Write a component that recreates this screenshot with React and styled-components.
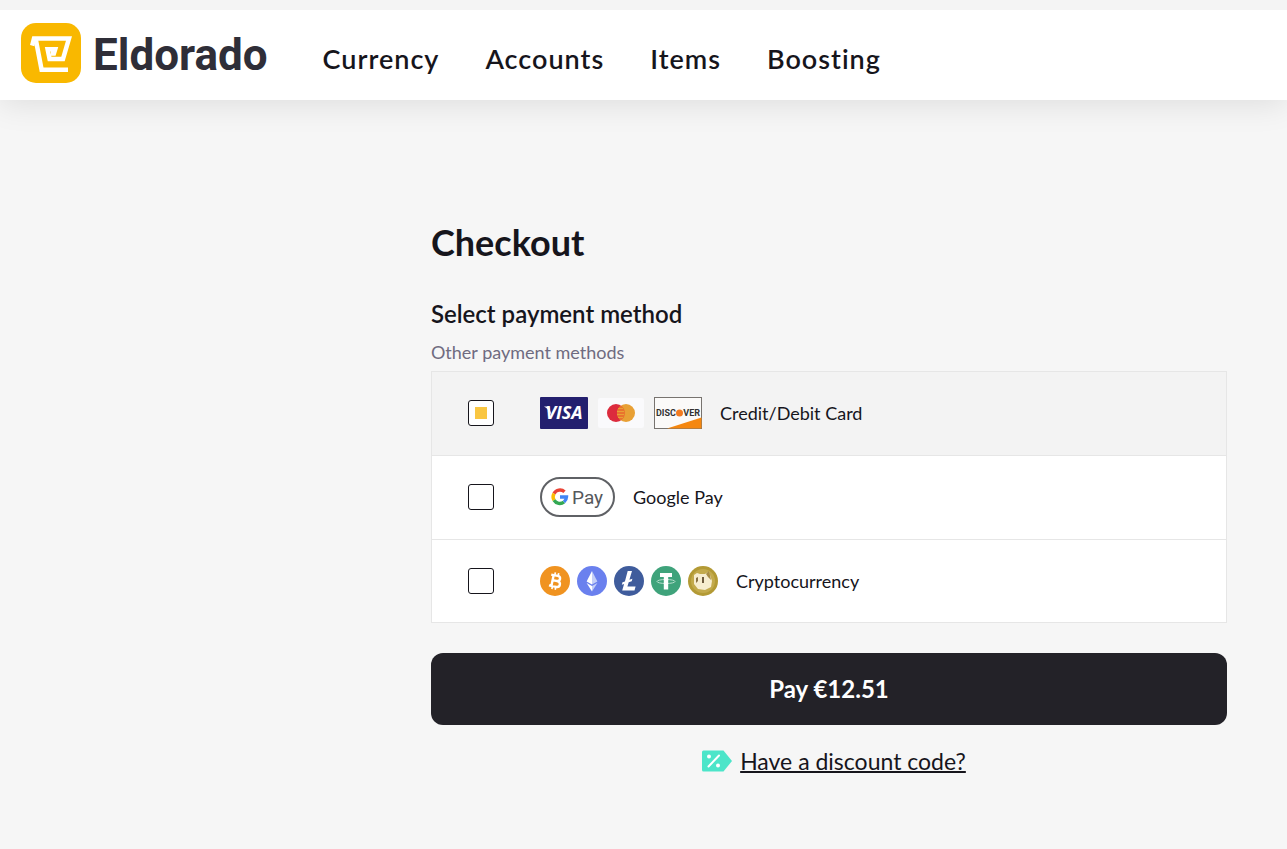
import React, { useState } from 'react'
import styled, { createGlobalStyle } from 'styled-components'

const navLinks = ['Currency', 'Accounts', 'Items', 'Boosting']

const methods = [
    { id: 'card', label: 'Credit/Debit Card', gap: 9, icons: [VisaIcon, MastercardIcon, DiscoverIcon] },
    { id: 'gpay', label: 'Google Pay', gap: 0, icons: [GooglePayIcon] },
    { id: 'crypto', label: 'Cryptocurrency', gap: 7, icons: [BitcoinIcon, EthereumIcon, LitecoinIcon, TetherIcon, DogecoinIcon] },
]

function App() {

    const [selected, setSelected] = useState('card');

    return (
        <>
            <GlobalStyle />
            <Header>
                <Brand href="#">
                    <LogoMark />
                    <BrandName>Eldorado</BrandName>
                </Brand>
                <Menu>
                    {navLinks.map((link) => (
                        <a key={link} href="#">{link}</a>
                    ))}
                </Menu>
            </Header>

            <Main>
                <Title>Checkout</Title>
                <Subtitle>Select payment method</Subtitle>
                <Hint id="methods-hint">Other payment methods</Hint>

                <MethodList role="radiogroup" aria-labelledby="methods-hint">
                    {methods.map((method) => (
                        <MethodRow key={method.id} $active={selected === method.id}>
                            <Radio
                                type="radio"
                                name="payment"
                                value={method.id}
                                checked={selected === method.id}
                                onChange={() => setSelected(method.id)}
                            />
                            <Icons $gap={method.gap}>
                                {method.icons.map((Icon, index) => <Icon key={index} />)}
                            </Icons>
                            <MethodName>{method.label}</MethodName>
                        </MethodRow>
                    ))}
                </MethodList>

                <PayButton type="button">Pay €12.51</PayButton>

                <Discount href="#">
                    <DiscountIcon />
                    <span>Have a discount code?</span>
                </Discount>
            </Main>
        </>
    )
}

export default App

function LogoMark() {
    return (
        <svg width="60" height="60" viewBox="0 0 60 60" aria-hidden="true">
            <rect width="60" height="60" rx="15" fill="#f9b800" />
            <g fill="none" stroke="#fff" strokeWidth="4.5">
                <path d="M11.2 22.6L13 15.5H48L42 36H28.6L26.6 26.3H34.2L32.9 30.4H30" />
                <path d="M14.6 15.5L20.6 46.7H47" />
            </g>
        </svg>
    )
}

function VisaIcon() {
    return (
        <svg width="48" height="32" viewBox="0 0 48 32" aria-hidden="true">
            <rect width="48" height="32" rx="1" fill="#231f6e" />
            <path d="M4 9.5H9L12 20Q9 12 4 9.5Z" fill="#fff" />
            <text x="24" y="22" textAnchor="middle" fontFamily="Open Sans, sans-serif" fontSize="18" fontWeight="700" fontStyle="italic" fill="#fff">VISA</text>
        </svg>
    )
}

function MastercardIcon() {
    return (
        <svg width="48" height="32" viewBox="0 0 48 32" aria-hidden="true">
            <rect x="1" y="1" width="46" height="30" rx="2" fill="#fafafc" />
            <circle cx="19" cy="16" r="9" fill="#dc2b3d" />
            <circle cx="29" cy="16" r="9" fill="#e8a035" />
            <path d="M24 8.5A9 9 0 0 1 24 23.5A9 9 0 0 1 24 8.5Z" fill="#e9732d" />
            <path d="M21 11.5H26M20 14.5H27M20 17.5H27M21 20.5H26" stroke="#e8a035" strokeWidth="1" />
        </svg>
    )
}

function DiscoverIcon() {
    return (
        <svg width="48" height="32" viewBox="0 0 48 32" aria-hidden="true">
            <rect x="0.5" y="0.5" width="47" height="31" fill="#fbfaf9" stroke="#77736f" />
            <path d="M13 31.5L47.5 20.5V31.5Z" fill="#f5870f" />
            <circle cx="25.5" cy="16" r="3.5" fill="#f37b20" />
            <text x="2" y="19" fontFamily="Roboto, sans-serif" fontSize="9" fontWeight="700" fill="#333">DISC</text>
            <text x="46" y="19" textAnchor="end" fontFamily="Roboto, sans-serif" fontSize="9" fontWeight="700" fill="#333">VER</text>
        </svg>
    )
}

function GooglePayIcon() {
    return (
        <svg width="75" height="40" viewBox="0 0 75 40" aria-hidden="true">
            <rect x="1" y="1" width="73" height="38" rx="19" fill="#fff" stroke="#5f6165" strokeWidth="2" />
            <g fill="none" strokeWidth="3.4">
                <path d="M24.5 14.8A6.7 6.7 0 0 0 14 16.6" stroke="#ea4335" />
                <path d="M14 16.6A6.7 6.7 0 0 0 14 23.2" stroke="#fbbc04" />
                <path d="M14 23.2A6.7 6.7 0 0 0 24 25" stroke="#34a853" />
                <path d="M24 25A6.7 6.7 0 0 0 26.5 20H20" stroke="#4285f4" />
            </g>
            <text x="32" y="27" fontFamily="Roboto, sans-serif" fontSize="19" fill="#55585c">Pay</text>
        </svg>
    )
}

function BitcoinIcon() {
    return (
        <svg width="30" height="30" viewBox="0 0 30 30" aria-hidden="true">
            <circle cx="15" cy="15" r="15" fill="#f09320" />
            <g transform="rotate(12 15 15)" fill="none" stroke="#fff" strokeWidth="2.4">
                <path d="M10 9.5H16.5C20.5 9.5 20.5 14.6 16.5 14.6H12.5H17.2C21.6 14.6 21.6 20.5 17.2 20.5H10M12.5 9.5V20.5" />
                <path d="M13.6 6.5V9M17 6.5V9M13.6 21V23.5M17 21V23.5" strokeWidth="1.7" />
            </g>
        </svg>
    )
}

function EthereumIcon() {
    return (
        <svg width="30" height="30" viewBox="0 0 30 30" aria-hidden="true">
            <circle cx="15" cy="15" r="15" fill="#6a80ee" />
            <path d="M15 5V18.6L9.6 15.4Z" fill="#fff" />
            <path d="M15 5L20.4 15.4L15 18.6Z" fill="#c4cff8" />
            <path d="M15 20V25.5L9.6 17Z" fill="#fff" />
            <path d="M15 20L20.4 17L15 25.5Z" fill="#c4cff8" />
        </svg>
    )
}

function LitecoinIcon() {
    return (
        <svg width="30" height="30" viewBox="0 0 30 30" aria-hidden="true">
            <circle cx="15" cy="15" r="15" fill="#3f5c9c" />
            <path d="M13.7 5H18L15.4 13.8L18.4 12.8L17.7 15.2L14.7 16.3L13.4 20.6H21.6L20.5 24.4H8.2L10.1 17.9L7.8 18.7L8.5 16.2L10.9 15.4Z" fill="#fff" />
        </svg>
    )
}

function TetherIcon() {
    return (
        <svg width="30" height="30" viewBox="0 0 30 30" aria-hidden="true">
            <circle cx="15" cy="15" r="15" fill="#3fa37b" />
            <ellipse cx="15" cy="15.5" rx="9" ry="2" fill="none" stroke="#b9dfcf" />
            <path d="M9 7H21V11H17.2V23.5H12.8V11H9Z" fill="#fff" />
        </svg>
    )
}

function DogecoinIcon() {
    return (
        <svg width="30" height="30" viewBox="0 0 30 30" aria-hidden="true">
            <circle cx="15" cy="15" r="15" fill="#b39a35" />
            <circle cx="15" cy="15" r="12" fill="#c3aa4c" />
            <path d="M6 9L9 7L12 8H17L20 6L22 9L24 15L23 21L17 24L10 23L6 18Z" fill="#f7edcf" />
            <path d="M18 8L20.5 5L22 9L23 14L20 11Z" fill="#a88c45" />
            <path d="M8 12L10 11V15L8 17Z" fill="#887044" />
            <path d="M14 11H16V17H14Z" fill="#6d5a3d" />
        </svg>
    )
}

function DiscountIcon() {
    return (
        <svg width="30" height="22" viewBox="0 0 30 22" aria-hidden="true">
            <path d="M1.5 0.5H21.5L30 11L21.5 21.5H1.5Q0 21.5 0 20V2Q0 0.5 1.5 0.5Z" fill="#4ce5c9" />
            <path d="M6.5 16.5L17 5.5" stroke="#fff" strokeWidth="2" strokeLinecap="round" />
            <circle cx="7" cy="6.5" r="2" fill="#fff" />
            <circle cx="16" cy="15.5" r="2" fill="#fff" />
        </svg>
    )
}

const GlobalStyle = createGlobalStyle`
    * {
        box-sizing: border-box;
    }

    body {
        margin: 0;
        background: #f6f6f6;
        color: #16151c;
        font-family: Lato, sans-serif;
    }

    a {
        color: inherit;
        text-decoration: none;
    }
`

const Header = styled.header`
    display: flex;
    align-items: center;
    flex-wrap: wrap;
    gap: 10px 55px;
    min-height: 100px;
    padding: 0 21px;
    border-top: 10px solid #f4f4f4;
    background: #fff;
    box-shadow: 0 4px 30px rgba(0, 0, 0, .1);
`

const Brand = styled.a`
    display: flex;
    align-items: center;
    gap: 12px;
    padding-bottom: 4px;
`

const BrandName = styled.span`
    padding-top: 3px;
    font-family: Roboto, sans-serif;
    font-size: 44px;
    font-weight: 700;
    line-height: 56px;
    color: #2f2e38;
`

const Menu = styled.nav`
    display: flex;
    flex-wrap: wrap;
    gap: 8px 46px;
    padding-top: 8px;

    a {
        font-size: 27px;
        font-weight: 600;
        line-height: 32px;
        letter-spacing: 1px;
    }
`

const Main = styled.main`
    display: flex;
    flex-direction: column;
    padding: 120px 60px 60px 431px;

    @media (max-width: 1000px) {
        padding: 60px 20px;
    }
`

const Title = styled.h1`
    margin: 0 0 34px;
    font-size: 36px;
    font-weight: 700;
    line-height: 44px;
`

const Subtitle = styled.h2`
    margin: 0 0 10px;
    font-size: 24px;
    font-weight: 600;
    line-height: 32px;
`

const Hint = styled.p`
    margin: 0 0 7px;
    font-size: 18px;
    line-height: 24px;
    color: #6f6b80;
`

const MethodList = styled.div`
    margin-bottom: 30px;
    border: 1px solid #e6e6e6;
`

const MethodRow = styled.label`
    display: flex;
    align-items: center;
    min-height: 84px;
    padding: 0 36px 1px;
    border-bottom: 1px solid #e6e6e6;
    background: ${props => props.$active ? '#f3f3f3' : '#fff'};
    cursor: pointer;

    &:last-child {
        min-height: 82px;
        padding-bottom: 0;
        border-bottom: 0;
    }
`

const Radio = styled.input`
    appearance: none;
    display: grid;
    place-items: center;
    flex: none;
    width: 26px;
    height: 26px;
    margin: 0 46px 0 0;
    border: 1px solid #16151c;
    border-radius: 3px;
    background: #fff;
    cursor: pointer;

    &:checked::before {
        content: '';
        width: 12px;
        height: 12px;
        background: #f9c642;
    }
`

const Icons = styled.span`
    display: flex;
    align-items: center;
    gap: ${props => props.$gap}px;
    margin-right: 18px;
`

const MethodName = styled.span`
    font-size: 18px;
    line-height: 24px;
`

const PayButton = styled.button`
    height: 72px;
    padding: 0 20px 2px;
    border: 0;
    border-radius: 12px;
    background: #232228;
    color: #fff;
    font-family: inherit;
    font-size: 24px;
    font-weight: 700;
    cursor: pointer;
`

const Discount = styled.a`
    display: flex;
    align-items: center;
    align-self: center;
    gap: 8px;
    margin-top: 20px;
    padding-left: 10px;
    font-size: 23px;
    line-height: 32px;

    span {
        text-decoration: underline;
        text-decoration-thickness: 2px;
    }
`
